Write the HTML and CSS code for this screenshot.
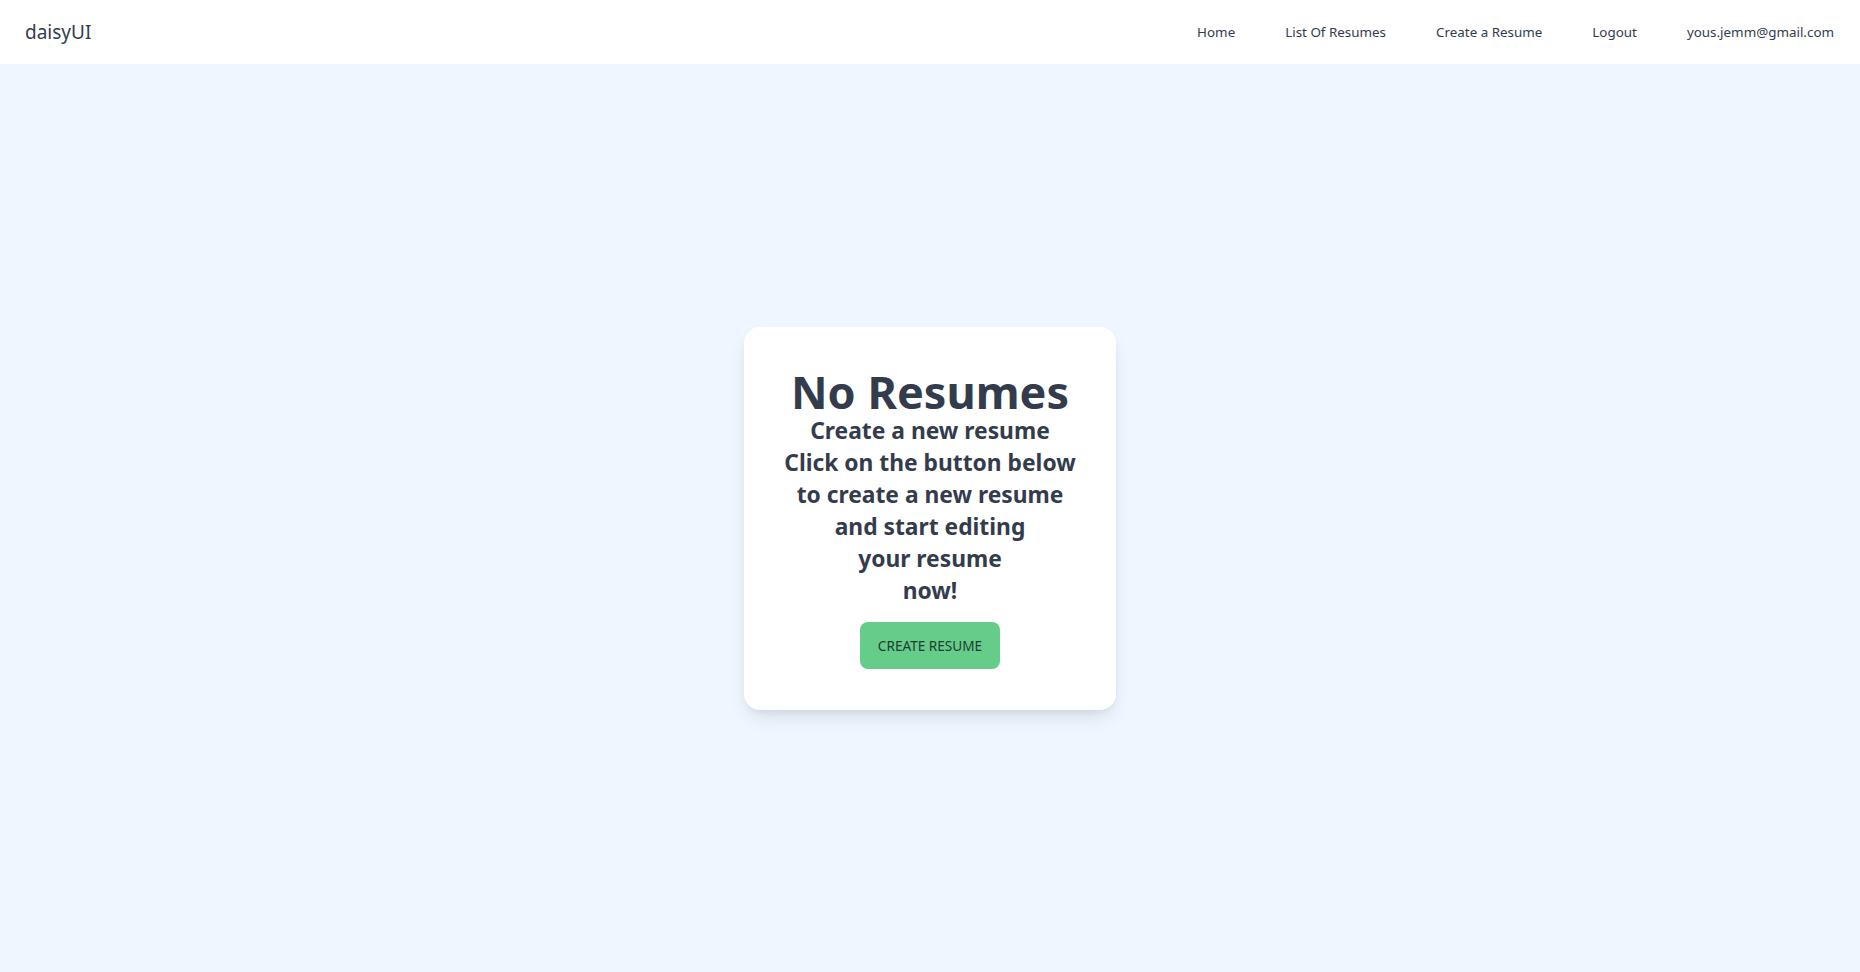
FILE: index.html
```html
<!DOCTYPE html>
<html lang="en">
<head>
<meta charset="utf-8">
<title>Resumes</title>
<link rel="stylesheet" href="styles.css">
</head>
<body>
<header class="navbar">
  <a class="brand" href="#">daisyUI</a>
  <nav class="menu">
    <a href="#">Home</a>
    <a href="#">List Of Resumes</a>
    <a href="#">Create a Resume</a>
    <a href="#">Logout</a>
    <a href="#">yous.jemm@gmail.com</a>
  </nav>
</header>
<main class="main">
  <section class="card">
    <h1 class="title">No Resumes</h1>
    <p class="subtitle">Create a new resume<br>Click on the button below<br>to create a new resume<br>and start editing<br>your resume<br>now!</p>
    <button class="btn">CREATE RESUME</button>
  </section>
</main>
</body>
</html>
```

FILE: styles.css
```css
* { box-sizing: border-box; }
html, body { margin: 0; padding: 0; }
body {
  font-family: "Noto Sans", "Open Sans", sans-serif;
  color: #333c4d;
  background: #eff6ff;
  min-height: 972px;
  display: flex;
  flex-direction: column;
}
.navbar {
  height: 64px;
  background: #ffffff;
  display: flex;
  align-items: center;
  justify-content: space-between;
  padding: 0 26px 0 25px;
}
.brand {
  font-size: 19px;
  color: #333c4d;
  text-decoration: none;
}
.menu {
  display: flex;
  gap: 50px;
}
.menu a {
  font-size: 13.4px;
  color: #333c4d;
  text-decoration: none;
}
.main {
  flex: 1;
  display: flex;
  align-items: center;
  justify-content: center;
}
.card {
  width: 372px;
  height: 383px;
  background: #ffffff;
  border-radius: 16px;
  box-shadow: 0 10px 20px -5px rgba(0,0,0,0.12), 0 4px 8px -4px rgba(0,0,0,0.08);
  display: flex;
  flex-direction: column;
  align-items: center;
  padding-top: 41px;
  text-align: center;
}
.title {
  margin: 0;
  font-size: 45px;
  line-height: 47px;
  font-weight: 700;
}
.subtitle {
  margin: 0;
  font-size: 22.8px;
  line-height: 32px;
  font-weight: 700;
}
.btn {
  margin-top: 15px;
  width: 140px;
  height: 47px;
  border: none;
  border-radius: 8px;
  background: #66cc8a;
  color: #223d30;
  font-family: inherit;
  font-size: 13.6px;
}
```
